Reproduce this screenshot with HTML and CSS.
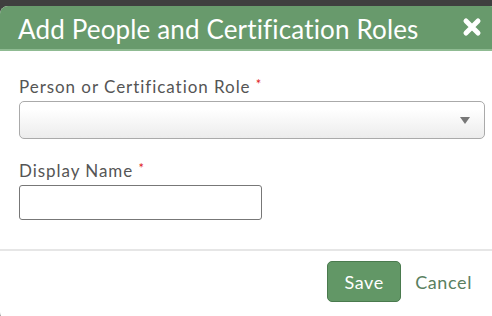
FILE: index.html
```html
<!DOCTYPE html>
<html lang="en">
<head>
  <meta charset="UTF-8" />
  <title>Add People and Certification Roles</title>
  <link rel="stylesheet" href="styles.css">
</head>
<body>
  <div class="dialog">
    <div class="dialog-header">
      <h1>Add People and Certification Roles</h1>
      <button class="close" aria-label="Close">
        <svg width="20" height="20" viewBox="0 0 20 20">
          <path d="M4 4 L16 16 M16 4 L4 16" stroke="#fff" stroke-width="5" stroke-linecap="round"/>
        </svg>
      </button>
    </div>

    <div class="dialog-body">
      <label class="field-label">Person or Certification Role <span class="req">*</span></label>
      <div class="select">
        <span class="arrow"></span>
      </div>

      <label class="field-label second">Display Name <span class="req">*</span></label>
      <input type="text" class="text-input" />
    </div>

    <div class="dialog-footer">
      <button class="btn-save">Save</button>
      <a href="#" class="btn-cancel">Cancel</a>
    </div>
  </div>
</body>
</html>
```

FILE: styles.css
```css
* {
  margin: 0;
  padding: 0;
  box-sizing: border-box;
}

body {
  font-family: Lato, 'Open Sans', sans-serif;
  background: #3f3f3f;
  padding-top: 6px;
  height: 316px;
  overflow: hidden;
}

.dialog {
  background: #fff;
  border-radius: 8px 8px 0 14px;
  height: 320px;
  margin-right: -6px;
}

.dialog-header {
  background: #689a6c;
  border-radius: 8px 8px 0 0;
  border-bottom: 2px solid #8fbb92;
  height: 45px;
  display: flex;
  align-items: center;
  justify-content: space-between;
  padding: 2px 16px 0 18px;
}

.dialog-header h1 {
  color: #fff;
  font-size: 26px;
  font-weight: normal;
  letter-spacing: 0.15px;
}

.close {
  background: none;
  border: none;
  display: flex;
  margin-top: -4px;
}

.dialog-body {
  padding: 25px 13px 29px 19px;
  border-bottom: 2px solid #e6e6e6;
}

.field-label {
  display: block;
  color: #555;
  font-size: 17px;
  letter-spacing: 0.95px;
  margin-bottom: 4px;
}

.field-label.second {
  margin-top: 21px;
}

.req {
  color: #e02020;
  font-size: 13px;
  vertical-align: top;
}

.select {
  height: 38px;
  border: 1px solid #aaa;
  border-radius: 5px;
  background: linear-gradient(#fff 20%, #ececec);
  display: flex;
  align-items: center;
  justify-content: flex-end;
  padding-right: 14px;
}

.arrow {
  width: 0;
  height: 0;
  border-left: 5px solid transparent;
  border-right: 5px solid transparent;
  border-top: 7px solid #777;
}

.text-input {
  display: block;
  width: 243px;
  height: 35px;
  border: 1px solid #777;
  border-radius: 3px;
}

.dialog-footer {
  display: flex;
  justify-content: flex-end;
  align-items: center;
  gap: 14px;
  padding: 10px 26px 0 0;
}

.btn-save {
  background: #629766;
  color: #fff;
  border: 1px solid #4a7a4e;
  border-radius: 5px;
  font-family: inherit;
  font-size: 18px;
  letter-spacing: 0.6px;
  width: 74px;
  height: 41px;
}

.btn-cancel {
  color: #5a7f61;
  font-size: 18px;
  letter-spacing: 0.6px;
  text-decoration: none;
}
```
